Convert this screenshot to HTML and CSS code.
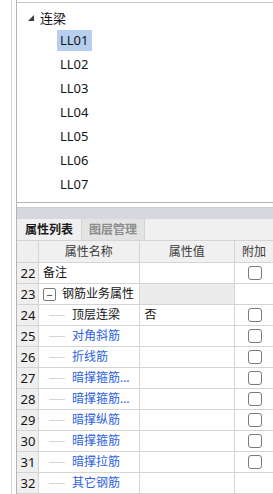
FILE: index.html
```html
<!DOCTYPE html>
<html>
<head>
<meta charset="utf-8">
<link rel="stylesheet" href="styles.css">
</head>
<body>
<div class="frame">
  <div class="strip"></div>
  <div class="main">
    <div class="tree">
      <div class="node">
        <svg class="tri" width="6" height="6" viewBox="0 0 6 6"><path d="M6 0 L6 6 L0 6 Z" fill="#3c3c3c"/></svg>
        <span>连梁</span>
      </div>
      <div class="leaf sel"><span>LL01</span></div>
      <div class="leaf"><span>LL02</span></div>
      <div class="leaf"><span>LL03</span></div>
      <div class="leaf"><span>LL04</span></div>
      <div class="leaf"><span>LL05</span></div>
      <div class="leaf"><span>LL06</span></div>
      <div class="leaf"><span>LL07</span></div>
    </div>
    <div class="gap"></div>
    <div class="bar"></div>
    <div class="tabs">
      <div class="tab active">属性列表</div>
      <div class="tab">图层管理</div>
    </div>
    <div class="grid">
      <div class="row head">
        <div class="c num"></div>
        <div class="c name center">属性名称</div>
        <div class="c val center">属性值</div>
        <div class="c ext center">附加</div>
      </div>
      <div class="row">
        <div class="c num">22</div>
        <div class="c name">备注</div>
        <div class="c val"></div>
        <div class="c ext"><span class="cb"></span></div>
      </div>
      <div class="row">
        <div class="c num">23</div>
        <div class="c name"><span class="minus">−</span>钢筋业务属性</div>
        <div class="c val shade"></div>
        <div class="c ext"></div>
      </div>
      <div class="row">
        <div class="c num">24</div>
        <div class="c name"><span class="line"></span>顶层连梁</div>
        <div class="c val">否</div>
        <div class="c ext"><span class="cb"></span></div>
      </div>
      <div class="row">
        <div class="c num">25</div>
        <div class="c name blue"><span class="line"></span>对角斜筋</div>
        <div class="c val"></div>
        <div class="c ext"><span class="cb"></span></div>
      </div>
      <div class="row">
        <div class="c num">26</div>
        <div class="c name blue"><span class="line"></span>折线筋</div>
        <div class="c val"></div>
        <div class="c ext"><span class="cb"></span></div>
      </div>
      <div class="row">
        <div class="c num">27</div>
        <div class="c name blue"><span class="line"></span>暗撑箍筋...</div>
        <div class="c val"></div>
        <div class="c ext"><span class="cb"></span></div>
      </div>
      <div class="row">
        <div class="c num">28</div>
        <div class="c name blue"><span class="line"></span>暗撑箍筋...</div>
        <div class="c val"></div>
        <div class="c ext"><span class="cb"></span></div>
      </div>
      <div class="row">
        <div class="c num">29</div>
        <div class="c name blue"><span class="line"></span>暗撑纵筋</div>
        <div class="c val"></div>
        <div class="c ext"><span class="cb"></span></div>
      </div>
      <div class="row">
        <div class="c num">30</div>
        <div class="c name blue"><span class="line"></span>暗撑箍筋</div>
        <div class="c val"></div>
        <div class="c ext"><span class="cb"></span></div>
      </div>
      <div class="row">
        <div class="c num">31</div>
        <div class="c name blue"><span class="line"></span>暗撑拉筋</div>
        <div class="c val"></div>
        <div class="c ext"><span class="cb"></span></div>
      </div>
      <div class="row">
        <div class="c num">32</div>
        <div class="c name blue"><span class="line"></span>其它钢筋</div>
        <div class="c val"></div>
        <div class="c ext"></div>
      </div>
    </div>
  </div>
</div>
</body>
</html>
```

FILE: styles.css
```css
html, body {
  margin: 0;
  padding: 0;
  background: #ffffff;
  overflow: hidden;
}
body {
  width: 273px;
  height: 494px;
  font-family: "Noto Sans", "Noto Sans CJK SC", sans-serif;
  font-size: 13px;
  color: #141414;
}
.frame {
  display: flex;
  height: 494px;
}
.strip {
  width: 11px;
  flex: none;
  border-right: 1px solid #d6d6d6;
}
.main {
  margin-left: 4px;
  flex: 1;
  display: flex;
  flex-direction: column;
  border-left: 1px solid #b4b4b4;
  min-width: 0;
}
.tree {
  margin-top: 2px;
  height: 202px;
  border-top: 1px solid #c6c4ce;
  border-bottom: 1px solid #b4b4b4;
  padding-top: 5px;
  box-sizing: content-box;
}
.node {
  display: flex;
  align-items: center;
  height: 20px;
  padding-left: 11px;
}
.tri {
  margin-right: 6px;
  margin-top: -1px;
}
.node span {
  line-height: 20px;
}
.leaf {
  height: 24px;
  display: flex;
  align-items: center;
  padding-left: 40px;
}
.leaf span {
  padding: 0 3px;
  line-height: 21px;
}
.leaf.sel span {
  background: #b6cfee;
}
.gap {
  height: 5px;
}
.bar {
  height: 11px;
  background: #d6d8dd;
  border-top: 1px solid #cacbd0;
}
.tabs {
  height: 22px;
  background: #f0f0f0;
  display: flex;
  border-bottom: 1px solid #d4d4d4;
  box-sizing: border-box;
  font-size: 12px;
}
.tab {
  width: 64px;
  text-align: center;
  line-height: 21px;
  font-weight: bold;
  color: #8c8c8c;
  background: #e3e3e3;
  border-left: 1px solid #d4d4d4;
  border-right: 1px solid #d4d4d4;
  box-sizing: border-box;
}
.tab.active {
  color: #1a1a1a;
  background: #f0f0f0;
  border-left: none;
  border-right: none;
}
.grid {
  display: flex;
  flex-direction: column;
  font-size: 12px;
}
.row {
  display: flex;
  height: 21px;
  border-bottom: 1px solid #d4d4d4;
  box-sizing: border-box;
}
.row.head {
  height: 22px;
  background: #f0f0f0;
}
.c {
  border-right: 1px solid #d4d4d4;
  box-sizing: border-box;
  display: flex;
  align-items: center;
  white-space: nowrap;
  overflow: hidden;
  line-height: 20px;
}
.num {
  width: 22px;
  background: #efefef;
  justify-content: center;
  padding-left: 1px;
  font-size: 13px;
}
.name {
  width: 101px;
  padding-left: 4px;
}
.val {
  width: 96px;
  padding-left: 5px;
}
.ext {
  width: 38px;
  border-right: none;
  justify-content: center;
  padding-left: 1px;
}
.center {
  justify-content: center;
  padding-left: 0;
}
.head .c {
  color: #3a3a3a;
}
.shade {
  background: #ececec;
}
.blue {
  color: #2c62e0;
}
.line {
  display: inline-block;
  width: 16px;
  height: 1px;
  background: #d6d6d6;
  margin-left: 6px;
  margin-right: 7px;
}
.minus {
  display: inline-flex;
  width: 11px;
  height: 11px;
  border: 1px solid #7a7a7a;
  border-radius: 2px;
  align-items: center;
  justify-content: center;
  font-size: 11px;
  line-height: 11px;
  margin-right: 6px;
  color: #333;
}
.cb {
  display: inline-block;
  width: 12px;
  height: 12px;
  border: 1px solid #7a7a7a;
  border-radius: 3px;
  background: #ffffff;
}
```
